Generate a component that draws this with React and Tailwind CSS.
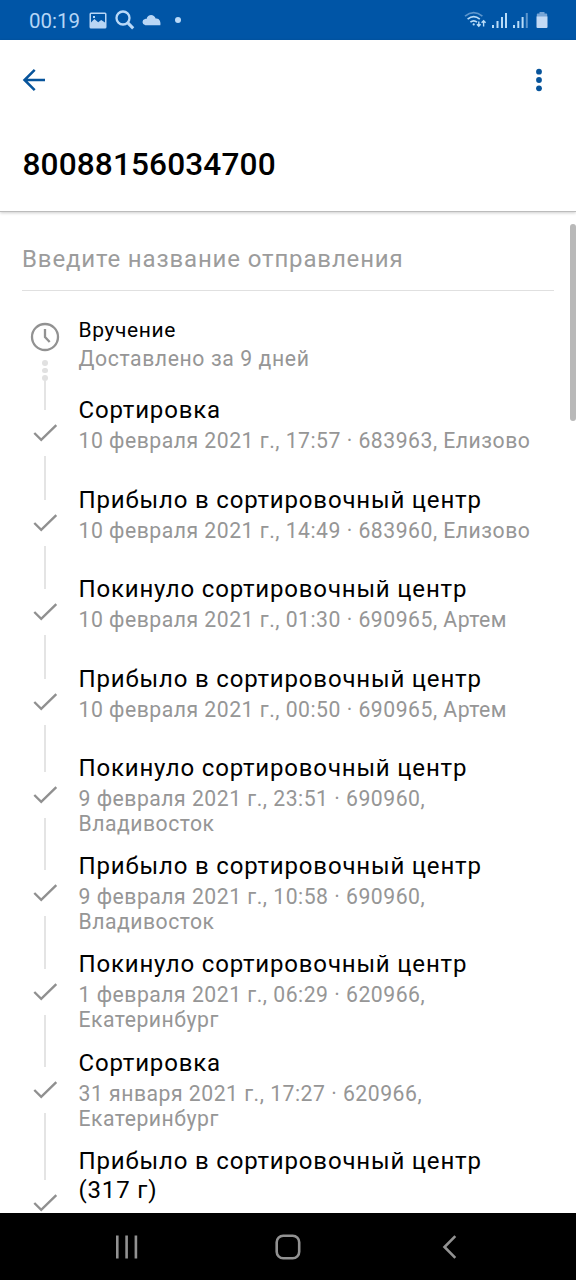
import React from "react";

const events = [
  { title: "Сортировка", lines: ["10 февраля 2021 г., 17:57 · 683963, Елизово"] },
  { title: "Прибыло в сортировочный центр", lines: ["10 февраля 2021 г., 14:49 · 683960, Елизово"] },
  { title: "Покинуло сортировочный центр", lines: ["10 февраля 2021 г., 01:30 · 690965, Артем"] },
  { title: "Прибыло в сортировочный центр", lines: ["10 февраля 2021 г., 00:50 · 690965, Артем"] },
  { title: "Покинуло сортировочный центр", lines: ["9 февраля 2021 г., 23:51 · 690960,", "Владивосток"] },
  { title: "Прибыло в сортировочный центр", lines: ["9 февраля 2021 г., 10:58 · 690960,", "Владивосток"] },
  { title: "Покинуло сортировочный центр", lines: ["1 февраля 2021 г., 06:29 · 620966,", "Екатеринбург"] },
  { title: "Сортировка", lines: ["31 января 2021 г., 17:27 · 620966,", "Екатеринбург"] },
];

function StatusBar() {
  return (
    <div className="flex h-[40px] shrink-0 items-center bg-[#0055a6] pl-[29px] pr-[28px] text-[#b5d6f6]">
      <span className="w-[60px] whitespace-nowrap pt-[2px] text-[20.5px] leading-none">00:19</span>
      <svg className="h-[17px] w-[18px]" viewBox="0 0 18 17">
        <path fillRule="evenodd" fill="#b9d6f5" d="M2 0.5h14a1.5 1.5 0 0 1 1.5 1.5v13a1.5 1.5 0 0 1-1.5 1.5H2A1.5 1.5 0 0 1 .5 15V2A1.5 1.5 0 0 1 2 .5zM2 2v8.5l3.4-3.6 3.8 3.4 3-2.3L16 10.5V2zM4 4h2v2H4z" />
      </svg>
      <svg className="ml-[8px] h-[20px] w-[20px]" viewBox="0 0 20 20" fill="none" stroke="#b9d9f8" strokeWidth="2.3">
        <circle cx="8" cy="8" r="6.5" />
        <path d="M12.6 12.6 18.2 18.4" strokeWidth="3" />
      </svg>
      <svg className="ml-[7px] h-[12px] w-[19px]" viewBox="0 0 19 12" fill="#b9d6f5">
        <path d="M3.4 11.2a3.2 3.2 0 0 1-.4-6.3q.9-.3 1.500.1C5.600-.4 12.400-.4 13.600 4.600q2.900-.6 4.300 2.200.9 2.200.4 4.400z" />
      </svg>
      <span className="ml-[14px] h-[5.5px] w-[5.5px] rounded-full bg-[#b9d9f8]" />
      <svg className="ml-auto h-[20px] w-[23px]" viewBox="0 0 23 20" fill="none" stroke="#b9dcf8" strokeWidth="1.7">
        <path d="M1 6.2Q9.7-.8 18.4 6.2" stroke="#5c95cc" />
        <path d="M3.6 9.2Q9.7 4.2 15.8 9.2" />
        <path d="M6.4 12.2Q9.7 9.5 13 12.2" />
        <circle cx="9.7" cy="14.4" r="1.1" fill="#b9dcf8" stroke="none" />
        <path d="M14.8 11.5v4.5M13 14.2l1.8 2 1.8-2M19.6 16.5V11M17.6 12.7l2-2 2 2" strokeWidth="1.4" />
      </svg>
      <svg className="ml-[5px] h-[17px] w-[16px]" viewBox="0 0 16 17" fill="#b9dcf8">
        <path d="M0 13h2v3H0zM4.5 9h2v7h-2zM9 5h2v11H9zM13 1h2v15h-2z" />
      </svg>
      <svg className="ml-[5px] h-[17px] w-[16px]" viewBox="0 0 16 17" fill="#b9dcf8">
        <path d="M0 13h2v3H0zM4.3 9h2v7h-2zM8.6 5h2v11h-2z" />
        <path d="M12.8 1h2v15h-2z" fill="#5c95cc" />
      </svg>
      <svg className="ml-[7px] h-[18px] w-[12px]" viewBox="0 0 12 18">
        <path fill="#77a5d6" d="M3.5 1h5v1.5h1.7a1 1 0 0 1 1 1V6H.8V3.5a1 1 0 0 1 1-1h1.7z" />
        <path fill="#c3daf5" d="M.5 5.5h11v10.5a1 1 0 0 1-1 1h-9a1 1 0 0 1-1-1z" />
      </svg>
    </div>
  );
}

function Check() {
  return (
    <svg className="my-[11px] h-[24px] w-[26px] shrink-0" viewBox="0 0 26 24" fill="none" stroke="#909090" strokeWidth="2.4">
      <path d="M2.3 12 9.2 18.8 24.3 4.1" />
    </svg>
  );
}

function Event({ title, lines, last }) {
  return (
    <div className={last ? "flex h-[128px]" : lines.length > 1 ? "flex h-[98.1px]" : "flex h-[89.5px]"}>
      <div className="ml-[32px] flex w-[26px] flex-col items-center">
        <div className="w-[2px] flex-1 bg-[#e4e4e4]" />
        <Check />
        <div className="w-[2px] flex-1 bg-[#e4e4e4]" />
      </div>
      <div className="ml-[20.5px] whitespace-nowrap pt-[8px]">
        <div className="whitespace-pre-line text-[24px] leading-[29px] tracking-[0.82px] text-black">{title}</div>
        <div className="mt-[3px] text-[21.2px] leading-[25px] tracking-[0.5px] text-[#969696]">
          {lines.map((l) => (
            <div key={l}>{l}</div>
          ))}
        </div>
      </div>
    </div>
  );
}

export default function App() {
  return (
    <div className="flex h-[1280px] w-[576px] flex-col overflow-hidden bg-white font-[Roboto,'Noto_Sans',sans-serif]">
      <StatusBar />
      <header className="flex h-[172px] shrink-0 flex-col border-b border-[#bcbcbc] bg-white shadow-[0_1px_3px_rgba(0,0,0,0.2)]">
        <div className="flex h-[79px] items-center justify-between pl-[22px] pr-[33px]">
          <svg className="h-[24px] w-[24px]" viewBox="0 0 24 24" fill="none" stroke="#07549b" strokeWidth="2.5">
            <path d="M12.7 1.8 2.5 12l10.2 10.2M2.5 12H23" />
          </svg>
          <svg className="h-[24px] w-[8px]" viewBox="0 0 8 24" fill="#07549b">
            <circle cx="4" cy="3.7" r="2.9" />
            <circle cx="4" cy="12" r="2.9" />
            <circle cx="4" cy="20.3" r="2.9" />
          </svg>
        </div>
        <h1 className="mt-[28px] pl-[22.5px] text-[31.6px] font-medium leading-[36px] tracking-[0.13px] text-black">80088156034700</h1>
      </header>
      <main className="flex min-h-0 flex-1 overflow-hidden">
        <div className="w-[570px] shrink-0">
          <div className="ml-[22px] mr-[16px] flex h-[79px] items-center border-b border-[#e0e0e0] pt-[16px] text-[24px] leading-[30px] tracking-[0.85px] text-[#9c9c9c]">
            Введите название отправления
          </div>
          <div className="flex h-[97.3px]">
            <div className="ml-[30px] flex w-[30px] flex-col items-center pt-[31px]">
              <svg className="h-[30px] w-[30px] shrink-0" viewBox="0 0 30 30" fill="none" stroke="#929292" strokeWidth="2.3">
                <circle cx="15" cy="15" r="13" />
                <path d="M15 7V15L19.7 20" />
              </svg>
              <div className="mt-[8px] flex flex-col gap-[2px]">
                <span className="h-[5.5px] w-[5.5px] rounded-full bg-[#e1e1e1]" />
                <span className="h-[5.5px] w-[5.5px] rounded-full bg-[#e1e1e1]" />
                <span className="h-[5.5px] w-[5.5px] rounded-full bg-[#e1e1e1]" />
              </div>
              <div className="w-[2px] flex-1 bg-[#e4e4e4]" />
            </div>
            <div className="ml-[18.5px] whitespace-nowrap pt-[26px]">
              <div className="text-[21px] leading-[27px] tracking-[0.6px] text-black">Вручение</div>
              <div className="mt-[1px] text-[21.2px] leading-[27px] tracking-[0.6px] text-[#969696]">Доставлено за 9 дней</div>
            </div>
          </div>
          {events.map((e, i) => (
            <Event key={i} {...e} />
          ))}
          <Event title={"Прибыло в сортировочный центр\n(317 г)"} lines={[]} last />
        </div>
        <div className="mt-[12px] h-[197px] w-[6px] shrink-0 rounded-[3px] bg-[#b9b9b9]" />
      </main>
      <nav className="flex h-[67px] shrink-0 items-center bg-black">
        <svg className="ml-[114px] h-[26px] w-[26px]" viewBox="0 0 26 26" fill="none" stroke="#929292" strokeWidth="2.6">
          <path d="M3.3 1.5v23M12.6 1.5v23M21.9 1.5v23" />
        </svg>
        <svg className="ml-[135px] h-[26px] w-[26px]" viewBox="0 0 26 26" fill="none" stroke="#929292" strokeWidth="2.6">
          <rect x="1.7" y="1.7" width="22.5" height="22.5" rx="6.5" />
        </svg>
        <svg className="ml-[140px] h-[26px] w-[18px]" viewBox="0 0 18 26" fill="none" stroke="#929292" strokeWidth="2.6">
          <path d="M14.3 2.2 3.5 13l10.8 10.8" />
        </svg>
      </nav>
    </div>
  );
}
